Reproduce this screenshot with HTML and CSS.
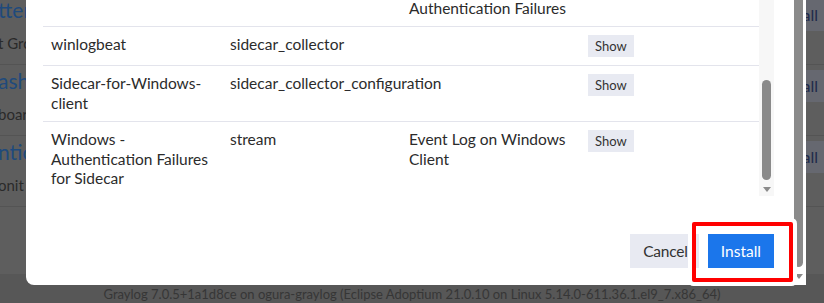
FILE: index.html
```html
<!DOCTYPE html>
<html lang="en">
<head>
<meta charset="utf-8">
<title>Install content pack</title>
<link rel="stylesheet" href="styles.css">
</head>
<body>
<div class="page">
  <div class="pack-list">
    <div class="pack-row">
      <div class="pack-info">
        <div class="pack-title">tter</div>
        <div class="pack-desc">t Gro</div>
      </div>
      <div class="pack-btn">Install</div>
    </div>
    <div class="pack-row">
      <div class="pack-info">
        <div class="pack-title">ash</div>
        <div class="pack-desc">boar</div>
      </div>
      <div class="pack-btn">Install</div>
    </div>
    <div class="pack-row">
      <div class="pack-info">
        <div class="pack-title">ntic</div>
        <div class="pack-desc">onit</div>
      </div>
      <div class="pack-btn">Install</div>
    </div>
  </div>
  <div class="page-footer">Graylog 7.0.5+1a1d8ce on ogura-graylog (Eclipse Adoptium 21.0.10 on Linux 5.14.0-611.36.1.el9_7.x86_64)</div>
</div>

<div class="backdrop">
  <div class="modal">
    <div class="modal-main">
      <div class="modal-body">
        <div class="table-wrap">
          <table class="entities">
            <tr>
              <td>Windows Security</td>
              <td>stream</td>
              <td>Windows Security Event Log<br>Windows Event Log<br>Authentication Failures</td>
              <td><span class="show-btn">Show</span></td>
            </tr>
            <tr>
              <td>winlogbeat</td>
              <td>sidecar_collector</td>
              <td></td>
              <td><span class="show-btn">Show</span></td>
            </tr>
            <tr>
              <td>Sidecar-for-Windows-client</td>
              <td>sidecar_collector_configuration</td>
              <td></td>
              <td><span class="show-btn">Show</span></td>
            </tr>
            <tr>
              <td>Windows - Authentication Failures for Sidecar</td>
              <td>stream</td>
              <td>Event Log on Windows Client</td>
              <td><span class="show-btn">Show</span></td>
            </tr>
          </table>
        </div>
        <div class="inner-track">
          <div class="inner-thumb"></div>
          <div class="arrow-down"></div>
        </div>
      </div>
      <div class="modal-footer">
        <button class="btn btn-cancel">Cancel</button>
        <button class="btn btn-install">Install</button>
      </div>
    </div>
    <div class="outer-track">
      <div class="outer-thumb"></div>
      <div class="arrow-down outer-arrow"></div>
    </div>
    <div class="highlight"></div>
  </div>
</div>
</body>
</html>
```
FILE: styles.css
```css
* { box-sizing: border-box; }
html, body {
  margin: 0;
  padding: 0;
  width: 824px;
  height: 303px;
  overflow: hidden;
}
body {
  background: #5e5e5e;
  font-family: "Lato", "Open Sans", sans-serif;
  color: #2a2a2a;
  position: relative;
}

/* underlying page (dimmed) */
.page {
  display: flex;
  flex-direction: column;
  height: 303px;
}
.pack-list {
  margin-top: -6px;
  flex: 1;
}
.pack-row {
  display: flex;
  justify-content: space-between;
  align-items: flex-start;
  height: 71px;
  border-bottom: 1px solid #545454;
  margin-left: -2px;
  margin-right: -24px;
}
.pack-title {
  margin-top: 4px;
  font-size: 21px;
  line-height: 24px;
  color: #1f4a7c;
}
.pack-desc {
  margin-top: 9px;
  font-size: 15px;
  line-height: 24px;
  color: #2a2a2a;
}
.pack-btn {
  margin-top: 5px;
  height: 32px;
  line-height: 32px;
  padding: 0 30px 0 14px;
  background: #666870;
  color: #1f2a4a;
  font-size: 16px;
}
.page-footer {
  background: #575757;
  color: #363636;
  font-size: 13px;
  line-height: 18px;
  text-align: center;
  padding-top: 11px;
  height: 29px;
  white-space: nowrap;
}

/* modal overlay */
.backdrop {
  position: absolute;
  inset: 0;
}
.modal {
  position: absolute;
  left: 26px;
  top: 0;
  width: 780px;
  height: 285px;
  background: #fff;
  border-bottom-left-radius: 8px;
  display: flex;
}
.modal-main {
  width: 768px;
  padding: 0 20px 17px 17px;
  display: flex;
  flex-direction: column;
}
.modal-body {
  height: 196px;
  display: flex;
  overflow: hidden;
}
.table-wrap {
  width: 716px;
  overflow: hidden;
}
.entities {
  width: 716px;
  table-layout: fixed;
  border-collapse: collapse;
  margin-top: -68px;
  font-size: 15.5px;
  line-height: 19.5px;
  color: #2b2b2b;
}
.entities td {
  width: 179px;
  padding: 8px 8px;
  vertical-align: top;
  border-top: 1px solid #e3e4ec;
}
.entities tr:first-child td { border-top: none; }
.show-btn {
  display: block;
  width: fit-content;
  height: 22px;
  line-height: 22px;
  padding: 0 7px;
  background: #e8eaf2;
  font-size: 13px;
  color: #333;
}
.inner-track {
  width: 15px;
  background: #f7f7f7;
  display: flex;
  flex-direction: column;
  align-items: center;
  padding-top: 80px;
}
.inner-thumb {
  width: 9px;
  height: 100px;
  border-radius: 5px;
  background: #8a8a8a;
}
.arrow-down {
  width: 0;
  height: 0;
  margin-top: 7px;
  border-left: 4px solid transparent;
  border-right: 4px solid transparent;
  border-top: 5px solid #8a8a8a;
}
.modal-footer {
  margin-top: 38px;
  display: flex;
  justify-content: flex-end;
  gap: 9px;
}
.btn {
  height: 34px;
  border: none;
  padding: 0 12px;
  font-family: inherit;
  font-size: 15.5px;
}
.btn-cancel {
  background: #e8eaf2;
  color: #333;
  padding: 0 11px 0 13px;
  letter-spacing: -0.2px;
}
.btn-install {
  background: #1b76eb;
  color: #fff;
  padding: 0 13px;
}
.outer-track {
  width: 12px;
  display: flex;
  flex-direction: column;
  align-items: flex-start;
}
.outer-thumb {
  width: 9px;
  height: 267px;
  background: #8a8a8a;
  border-radius: 0 0 5px 5px;
}
.outer-arrow {
  margin-top: 7px;
  margin-left: 1px;
}
.highlight {
  position: absolute;
  left: 666px;
  top: 222px;
  width: 101px;
  height: 60px;
  border: 4px solid #ff0000;
  box-shadow: 0 0 0 4px #fff;
  border-radius: 2px;
}
```
